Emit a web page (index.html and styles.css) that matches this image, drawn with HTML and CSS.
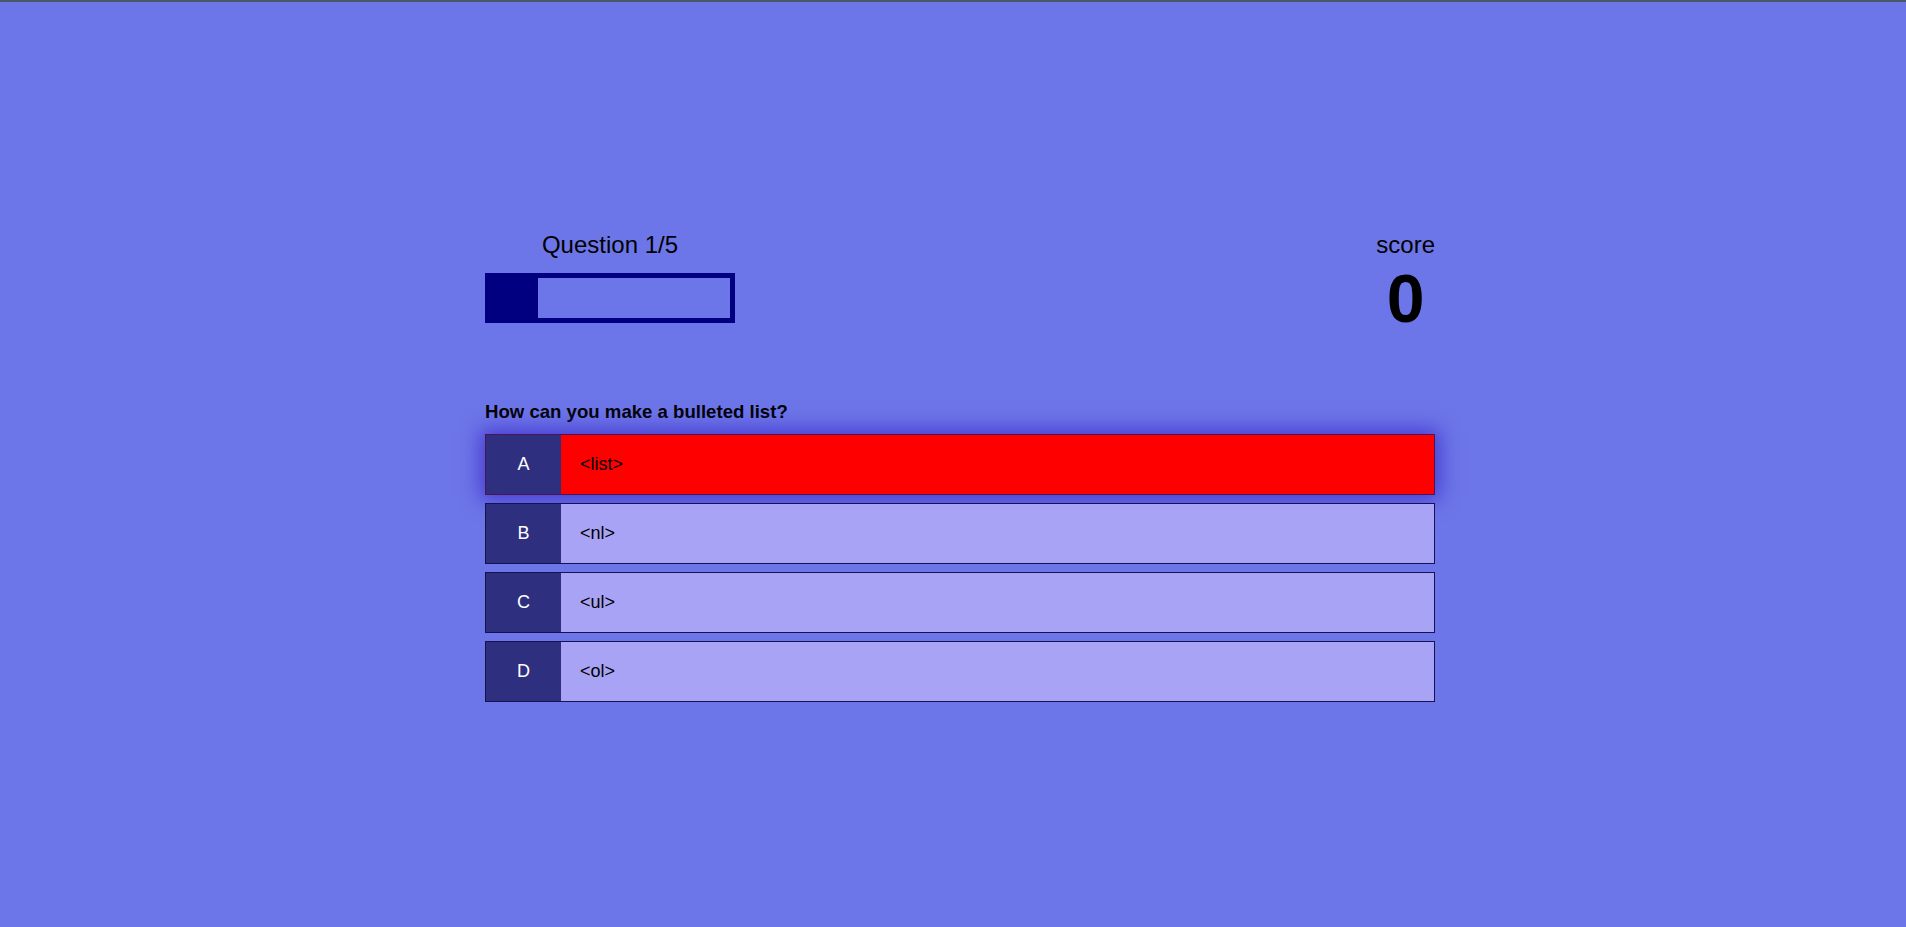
FILE: index.html
```html
<!DOCTYPE html>
<html lang="en">
<head>
<meta charset="utf-8">
<title>Quiz</title>
<link rel="stylesheet" href="styles.css">
</head>
<body>
<div class="topbar"></div>
<main class="quiz">
  <header class="hud">
    <div class="progress-col">
      <p class="hud-label">Question 1/5</p>
      <div class="progress"><div class="progress-fill" style="width:20%"></div></div>
    </div>
    <div class="score-col">
      <p class="hud-label">score</p>
      <p class="score">0</p>
    </div>
  </header>
  <section class="question">
    <h2 class="question-text">How can you make a bulleted list?</h2>
    <div class="options">
      <div class="option option-wrong"><span class="letter">A</span><span class="answer">&lt;list&gt;</span></div>
      <div class="option"><span class="letter">B</span><span class="answer">&lt;nl&gt;</span></div>
      <div class="option"><span class="letter">C</span><span class="answer">&lt;ul&gt;</span></div>
      <div class="option"><span class="letter">D</span><span class="answer">&lt;ol&gt;</span></div>
    </div>
  </section>
</main>
</body>
</html>
```

FILE: styles.css
```css
* { box-sizing: border-box; }
html, body { margin: 0; padding: 0; }
body {
  background: #6d76e8;
  font-family: "Liberation Sans", Arial, sans-serif;
  color: #000;
  min-height: 927px;
}
.topbar {
  height: 2px;
  background: #4b5866;
}
.quiz {
  width: 950px;
  margin-left: 485px;
  padding-top: 229px;
}
.hud {
  display: flex;
  justify-content: space-between;
  align-items: flex-start;
}
.progress-col {
  width: 250px;
  display: flex;
  flex-direction: column;
  align-items: center;
}
.hud-label {
  margin: 0;
  font-size: 24px;
  line-height: 28px;
}
.progress {
  margin-top: 14px;
  width: 250px;
  height: 50px;
  border: 5px solid #000080;
}
.progress-fill {
  height: 100%;
  background: #000080;
}
.score-col {
  display: flex;
  flex-direction: column;
  align-items: center;
}
.score {
  margin: 0;
  margin-top: 7px;
  font-size: 68px;
  font-weight: bold;
  line-height: 64px;
}
.question {
  margin-top: 71px;
}
.question-text {
  margin: 0 0 12px;
  font-size: 18.6px;
  font-weight: bold;
  line-height: 21px;
}
.options {
  display: flex;
  flex-direction: column;
  gap: 8px;
}
.option {
  display: flex;
  align-items: stretch;
  height: 61px;
  border: 1px solid #15134f;
  background: #a9a3f6;
  font-size: 18px;
}
.option-wrong {
  background: #ff0000;
  border-color: #4a1550;
  box-shadow: 0 0 20px 4px #4536d0;
}
.letter {
  width: 75px;
  flex: none;
  background: #2f2f80;
  color: #fff;
  display: flex;
  align-items: center;
  justify-content: center;
}
.answer {
  display: flex;
  align-items: center;
  padding-left: 19px;
}
```
